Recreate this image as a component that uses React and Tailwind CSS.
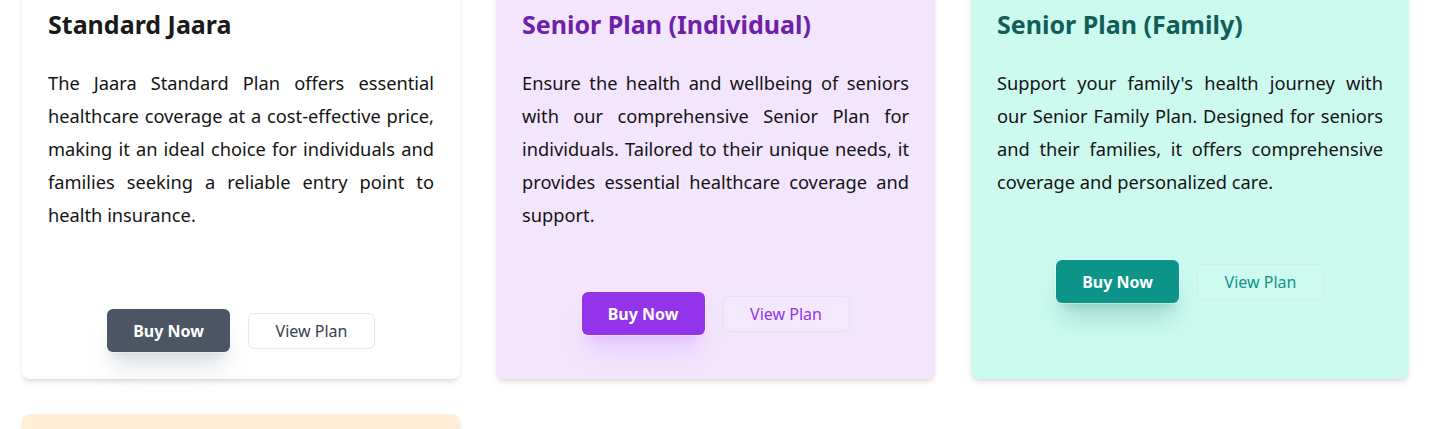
const plans = [
  {
    title: 'Standard Jaara',
    text: 'The Jaara Standard Plan offers essential healthcare coverage at a cost-effective price, making it an ideal choice for individuals and families seeking a reliable entry point to health insurance.',
    card: 'bg-white',
    heading: 'text-[#1a1a1a]',
    buy: 'bg-[#4b5563] shadow-gray-400/30',
    view: 'text-[#374151] border-gray-200 bg-white',
    gap: 'mt-[78px]',
  },
  {
    title: 'Senior Plan (Individual)',
    text: 'Ensure the health and wellbeing of seniors with our comprehensive Senior Plan for individuals. Tailored to their unique needs, it provides essential healthcare coverage and support.',
    card: 'bg-[#f3e5fd]',
    heading: 'text-[#6b21a8]',
    buy: 'bg-[#9333ea] shadow-purple-400/25',
    view: 'text-[#9333ea] border-[#e9dcf3] bg-[#f4e8fd]',
    gap: 'mt-[61px]',
  },
  {
    title: 'Senior Plan (Family)',
    text: "Support your family's health journey with our Senior Family Plan. Designed for seniors and their families, it offers comprehensive coverage and personalized care.",
    card: 'bg-[#ccfaef]',
    heading: 'text-[#115e59]',
    buy: 'bg-[#0d9488] shadow-teal-800/20',
    view: 'text-[#0d9488] border-[#d5ece6] bg-[#cefaf0]',
    gap: 'mt-[62px]',
  },
];

const PlanCard = ({ plan }) => (
  <div className={`${plan.card} rounded-lg shadow-md px-[26px] pt-8 pb-[27px]`}>
    <h3 className={`${plan.heading} text-[25px] leading-[34px] font-bold`}>{plan.title}</h3>
    <p className="mt-[25px] text-[18.25px] leading-[33px] text-[#141414] text-justify">{plan.text}</p>
    <div className={`${plan.gap} flex items-center justify-center gap-[18px]`}>
      <button className={`${plan.buy} w-[123px] h-[43px] rounded-md text-white text-[16px] font-bold shadow-xl ring-1 ring-white/40`}>
        Buy Now
      </button>
      <button className={`${plan.view} w-[127px] h-[36px] rounded-md border text-[16px]`}>
        View Plan
      </button>
    </div>
  </div>
);

const App = () => {
  return (
    <div className="min-h-screen bg-white overflow-hidden" style={{ fontFamily: '"Noto Sans", sans-serif' }}>
      <div className="-mt-[25px] pl-[22px] grid grid-cols-[438px_439px_438px] gap-x-[36px] gap-y-[35px]">
        {plans.map(plan => (
          <PlanCard key={plan.title} plan={plan} />
        ))}
        <div className="bg-[#ffedd5] rounded-lg shadow-md min-h-[300px]" />
      </div>
    </div>
  );
};

export default App;
